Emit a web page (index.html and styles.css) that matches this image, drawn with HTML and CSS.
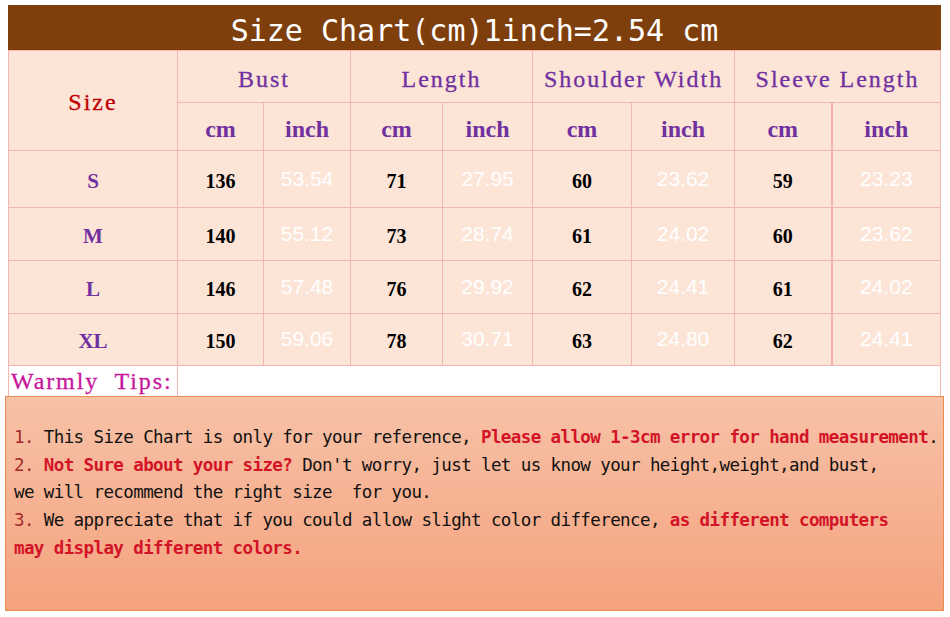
FILE: index.html
```html
<!DOCTYPE html>
<html>
<head>
<meta charset="utf-8">
<link rel="stylesheet" href="styles.css">
</head>
<body>
<div class="page">
  <div class="title">Size Chart(cm)1inch=2.54 cm</div>
  <table class="chart">
    <colgroup>
      <col style="width:169px"><col style="width:86px"><col style="width:87px"><col style="width:92px"><col style="width:90px"><col style="width:99px"><col style="width:103px"><col style="width:97px"><col style="width:109px">
    </colgroup>
    <tr class="h1">
      <td rowspan="2" class="size-head">Size</td>
      <td colspan="2" class="group">Bust</td>
      <td colspan="2" class="group">Length</td>
      <td colspan="2" class="group">Shoulder Width</td>
      <td colspan="2" class="group">Sleeve Length</td>
    </tr>
    <tr class="h2">
      <td class="unit">cm</td><td class="unit">inch</td>
      <td class="unit">cm</td><td class="unit">inch</td>
      <td class="unit">cm</td><td class="unit">inch</td>
      <td class="unit thick">cm</td><td class="unit">inch</td>
    </tr>
    <tr class="row r1">
      <td class="sz">S</td>
      <td class="cm">136</td><td class="in">53.54</td>
      <td class="cm">71</td><td class="in">27.95</td>
      <td class="cm">60</td><td class="in">23.62</td>
      <td class="cm thick">59</td><td class="in">23.23</td>
    </tr>
    <tr class="row">
      <td class="sz">M</td>
      <td class="cm">140</td><td class="in">55.12</td>
      <td class="cm">73</td><td class="in">28.74</td>
      <td class="cm">61</td><td class="in">24.02</td>
      <td class="cm thick">60</td><td class="in">23.62</td>
    </tr>
    <tr class="row">
      <td class="sz">L</td>
      <td class="cm">146</td><td class="in">57.48</td>
      <td class="cm">76</td><td class="in">29.92</td>
      <td class="cm">62</td><td class="in">24.41</td>
      <td class="cm thick">61</td><td class="in">24.02</td>
    </tr>
    <tr class="row r4">
      <td class="sz">XL</td>
      <td class="cm">150</td><td class="in">59.06</td>
      <td class="cm">78</td><td class="in">30.71</td>
      <td class="cm">63</td><td class="in">24.80</td>
      <td class="cm thick">62</td><td class="in">24.41</td>
    </tr>
    <tr class="tips-row">
      <td class="tips-label">Warmly  Tips:</td>
      <td colspan="8" class="tips-blank"></td>
    </tr>
  </table>
  <div class="notes">
    <div class="line"><span class="num">1.</span> This Size Chart is only for your reference, <b class="red">Please allow 1-3cm error for hand measurement</b>.</div>
    <div class="line"><span class="num">2.</span> <b class="red">Not Sure about your size?</b> Don't worry, just let us know your height,weight,and bust,</div>
    <div class="line">we will recommend the right size  for you.</div>
    <div class="line"><span class="num">3.</span> We appreciate that if you could allow slight color difference, <b class="red">as different computers</b></div>
    <div class="line"><b class="red">may display different colors.</b></div>
  </div>
</div>
</body>
</html>
```
FILE: styles.css
```css
html, body {
  margin: 0;
  padding: 0;
  background: #ffffff;
}

.page {
  padding: 5px 0 0 5px;
  width: 940px;
}

.title {
  margin-left: 3px;
  width: 933px;
  height: 45px;
  background: #7f3f0d;
  color: #ffffff;
  font-family: "DejaVu Sans Mono", monospace;
  font-size: 30px;
  line-height: 51px;
  text-align: center;
  white-space: pre;
  overflow: hidden;
}

.chart {
  margin-left: 3px;
  width: 933px;
  border-collapse: collapse;
  table-layout: fixed;
}

.chart td {
  border: 1px solid #f3b6b0;
  background: #fce4d7;
  text-align: center;
  padding: 0;
  white-space: pre;
}

.h1 td { height: 51px; }
.h2 td { height: 42px; }

.chart td.size-head {
  color: #c00000;
  font-family: "Liberation Serif", serif;
  font-size: 24px;
  letter-spacing: 2px;
  padding-top: 4px;
  -webkit-text-stroke: 0.3px #c00000;
}

.chart td.group {
  color: #7030a0;
  font-family: "Liberation Serif", serif;
  font-size: 24px;
  letter-spacing: 2px;
  padding-top: 5px;
  height: 46px;
  -webkit-text-stroke: 0.3px #7030a0;
}

.chart td.unit {
  color: #7030a0;
  font-family: "Liberation Serif", serif;
  font-weight: bold;
  font-size: 24px;
  padding-top: 5px;
}

.chart td.thick {
  border-right: 2px solid #f3b0ad;
}

.row td { height: 48px; }
.row.r1 td { height: 52px; }
.row.r4 td { height: 47px; }

.chart td.sz {
  color: #7030a0;
  font-family: "Liberation Serif", serif;
  font-weight: bold;
  font-size: 21px;
  padding-top: 4px;
}

.chart td.cm {
  color: #000000;
  font-family: "Liberation Serif", serif;
  font-weight: bold;
  font-size: 20px;
  padding-top: 4px;
}

.chart td.in {
  color: #ffffff;
  font-family: "Liberation Sans", sans-serif;
  font-size: 21px;
  padding-bottom: 1px;
}

.chart .tips-row td {
  background: #ffffff;
  height: 30px;
  border-bottom: none;
}

.chart td.tips-label {
  text-align: left;
  color: #c8169b;
  font-family: "Liberation Serif", serif;
  font-size: 24px;
  letter-spacing: 1.9px;
  padding: 0 0 0 2px;
  line-height: 30px;
  -webkit-text-stroke: 0.3px #c8169b;
}

.notes {
  box-sizing: border-box;
  width: 939px;
  height: 215px;
  border: 1px solid #e98a4f;
  background: linear-gradient(to bottom, #f7c2a7, #f5a27e);
  padding: 27px 0 0 8px;
  font-family: "DejaVu Sans Mono", monospace;
  font-size: 17.5px;
  letter-spacing: -0.6px;
  line-height: 27.7px;
  color: #111111;
}

.line {
  white-space: pre;
}

.num {
  color: #a8282a;
}

.red {
  color: #d31326;
  font-weight: bold;
}
```
